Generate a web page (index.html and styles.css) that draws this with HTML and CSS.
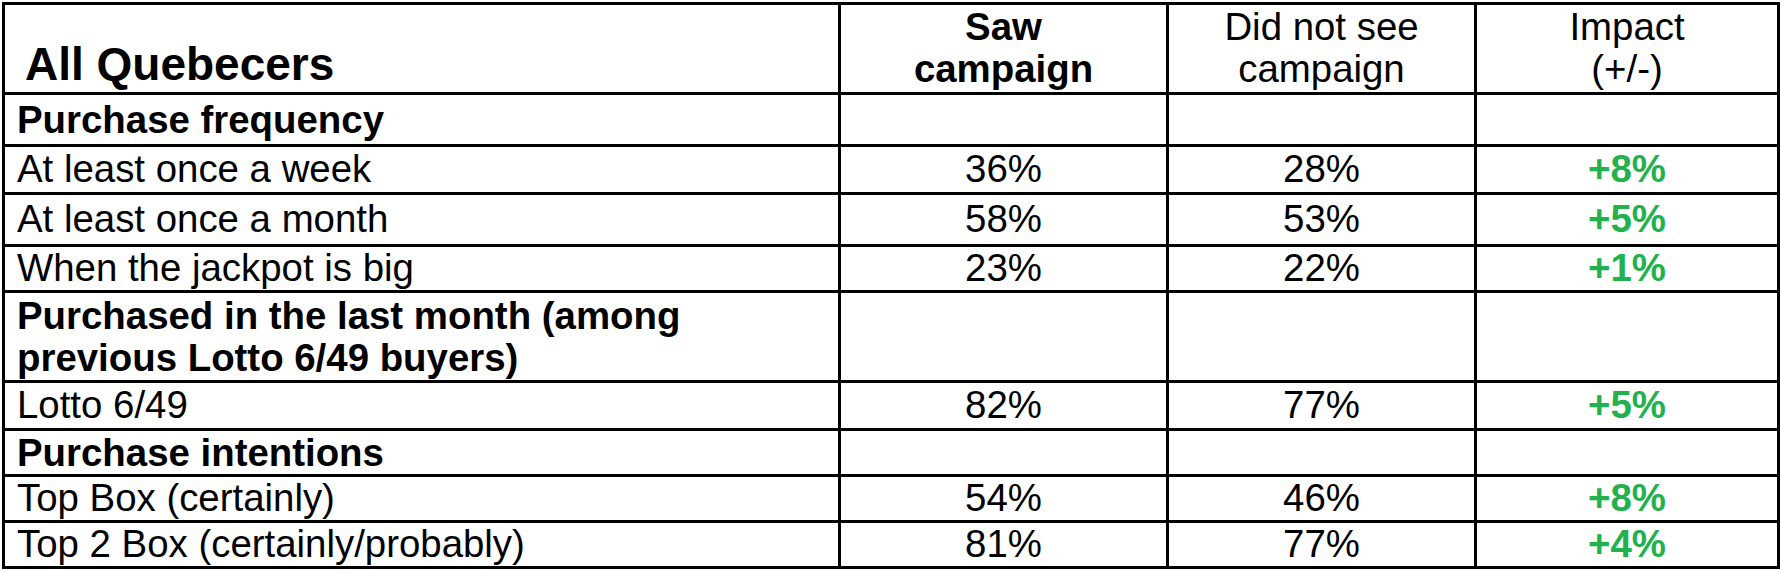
FILE: index.html
```html
<!DOCTYPE html>
<html lang="en">
<head>
<meta charset="utf-8">
<title>All Quebecers</title>
<link rel="stylesheet" href="styles.css">
</head>
<body>
<table class="grid">
  <colgroup>
    <col class="c-label">
    <col class="c-saw">
    <col class="c-not">
    <col class="c-impact">
  </colgroup>
  <tr class="r-head">
    <th class="title">All Quebecers</th>
    <th class="colhead bold">Saw<br>campaign</th>
    <th class="colhead">Did not see<br>campaign</th>
    <th class="colhead">Impact<br>(+/-)</th>
  </tr>
  <tr class="r-52">
    <td class="label section">Purchase frequency</td>
    <td></td><td></td><td></td>
  </tr>
  <tr class="r-48">
    <td class="label">At least once a week</td>
    <td class="num">36%</td><td class="num">28%</td><td class="num up">+8%</td>
  </tr>
  <tr class="r-52">
    <td class="label">At least once a month</td>
    <td class="num">58%</td><td class="num">53%</td><td class="num up">+5%</td>
  </tr>
  <tr class="r-46">
    <td class="label">When the jackpot is big</td>
    <td class="num">23%</td><td class="num">22%</td><td class="num up">+1%</td>
  </tr>
  <tr class="r-90">
    <td class="label section">Purchased in the last month (among<br>previous Lotto 6/49 buyers)</td>
    <td></td><td></td><td></td>
  </tr>
  <tr class="r-48">
    <td class="label">Lotto 6/49</td>
    <td class="num">82%</td><td class="num">77%</td><td class="num up">+5%</td>
  </tr>
  <tr class="r-46">
    <td class="label section">Purchase intentions</td>
    <td></td><td></td><td></td>
  </tr>
  <tr class="r-46">
    <td class="label">Top Box (certainly)</td>
    <td class="num">54%</td><td class="num">46%</td><td class="num up">+8%</td>
  </tr>
  <tr class="r-46">
    <td class="label">Top 2 Box (certainly/probably)</td>
    <td class="num">81%</td><td class="num">77%</td><td class="num up">+4%</td>
  </tr>
</table>
</body>
</html>
```

FILE: styles.css
```css
html, body {
  margin: 0;
  padding: 0;
  background: #ffffff;
}

body {
  padding: 2px 0 0 2px;
  font-family: "Liberation Sans", Arial, sans-serif;
  color: #000000;
}

.grid {
  border-collapse: collapse;
  table-layout: fixed;
  width: 1775px;
  font-size: 38.4px;
  line-height: 1.1;
}

.c-label { width: 836px; }
.c-saw { width: 328px; }
.c-not { width: 308px; }
.c-impact { width: 303px; }

.grid th,
.grid td {
  border: 3px solid #000000;
  padding: 0;
  vertical-align: middle;
}

.r-head { height: 90px; }
.r-90 { height: 90px; }
.r-52 { height: 52px; }
.r-48 { height: 48px; }
.r-46 { height: 46px; }

.title {
  text-align: left;
  vertical-align: bottom !important;
  font-weight: bold;
  font-size: 46px;
  padding: 0 0 2px 20px !important;
}

.colhead {
  text-align: center;
  font-weight: normal;
  line-height: 42px;
  padding-bottom: 2px !important;
}

.colhead.bold {
  font-weight: bold;
}

.label {
  text-align: left;
  padding-left: 12px !important;
  white-space: nowrap;
}

.section {
  font-weight: bold;
  line-height: 42px;
}

.num {
  text-align: center;
}

.up {
  color: #22b14c;
  font-weight: bold;
}
```
